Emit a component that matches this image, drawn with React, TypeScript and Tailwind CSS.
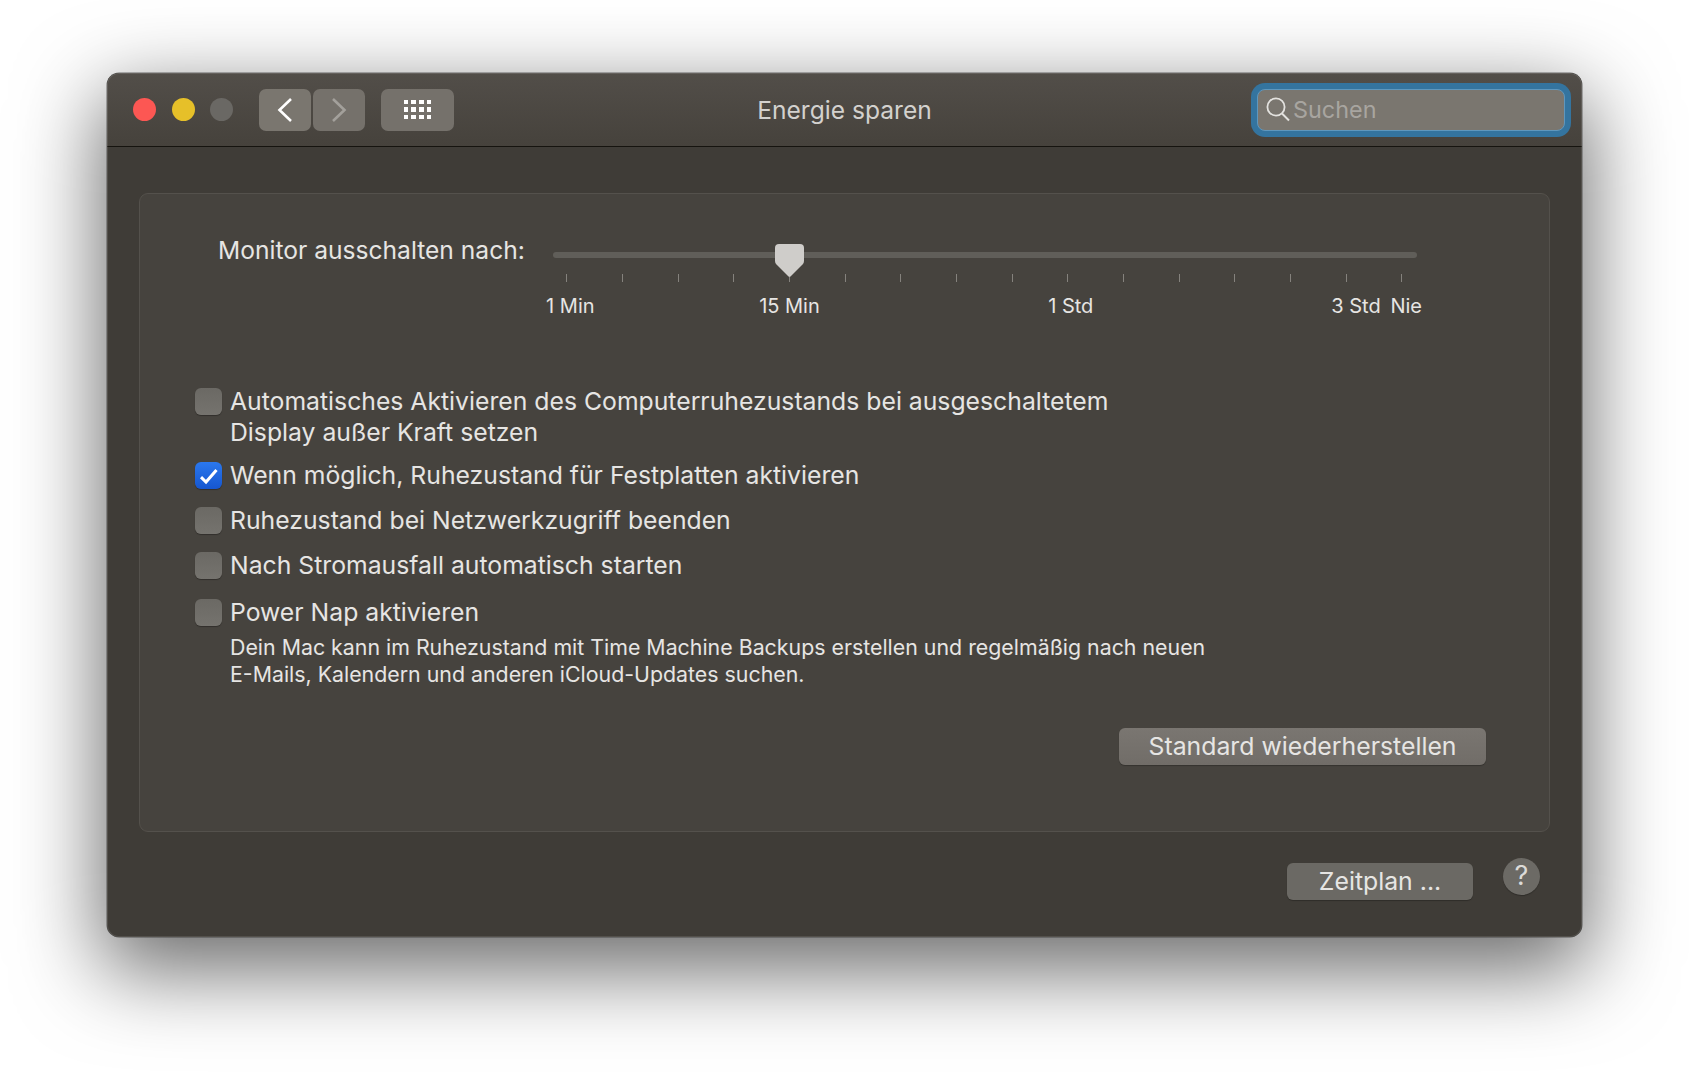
const font = "font-['Inter','Liberation_Sans',sans-serif]";

function Check({ checked, label }: { checked?: boolean; label: React.ReactNode }) {
  return (
    <div className="flex items-start">
      <div
        className={
          checked
            ? "w-[27px] h-[27px] rounded-[6px] bg-gradient-to-b from-[#2b78ee] to-[#1656cf] shadow-[0_1px_1px_rgba(0,0,0,0.3)] flex items-center justify-center shrink-0 mt-[2px]"
            : "w-[27px] h-[27px] rounded-[6px] bg-gradient-to-b from-[#6b6964] to-[#75736e] shadow-[0_1px_1px_rgba(0,0,0,0.3)] shrink-0 mt-[2px]"
        }
      >
        {checked && (
          <svg width="27" height="27" viewBox="0 0 27 27" fill="none">
            <path d="M6 15.2L11 20L21.5 8" stroke="white" strokeWidth="3" />
          </svg>
        )}
      </div>
      <div className="ml-[8px] text-[24.75px] leading-[31px] text-[#e6e5e3]">{label}</div>
    </div>
  );
}

const labels: [number, string, string][] = [
  [1, "1 Min", "ml-[7px]"],
  [5, "15 Min", ""],
  [10, "1 Std", "ml-[6px]"],
  [15, "3 Std", "ml-[20px]"],
  [16, "Nie", "ml-[9px]"],
];

export default function App() {
  return (
    <div className={`h-screen w-full bg-white overflow-hidden pt-[73px] pl-[107px] ${font}`}>
      <div className="w-[1475px] h-[864px] rounded-[12px] bg-[#3f3c37] overflow-hidden relative shadow-[0_0_0_0.5px_rgba(30,30,30,0.6),0_28px_84px_6px_rgba(0,0,0,0.58)]">
        <div className="absolute inset-0 rounded-[12px] pointer-events-none z-10 shadow-[inset_0_0_0_1px_rgba(255,255,255,0.11)]" />
        {/* Title bar */}
        <div className="h-[74px] flex items-center bg-gradient-to-b from-[#524e49] to-[#46423c] border-b border-[#16140f] px-[17px]">
          <div className="flex-1 flex items-center">
            <div className="ml-[9px] flex gap-[15.5px]">
              <div className="w-[23px] h-[23px] rounded-full bg-[#fc5753]" />
              <div className="w-[23px] h-[23px] rounded-full bg-[#e6c029]" />
              <div className="w-[23px] h-[23px] rounded-full bg-[#6a6864]" />
            </div>
            <div className="ml-[26px] flex gap-[2px]">
              <div className="w-[52px] h-[42px] rounded-[7px] bg-[#7a766f] flex items-center justify-center">
                <svg width="16" height="26" viewBox="0 0 16 26" fill="none">
                  <path d="M14 2L2.5 13L14 24" stroke="#fff" strokeWidth="2.6" />
                </svg>
              </div>
              <div className="w-[52px] h-[42px] rounded-[7px] bg-[#75716b] flex items-center justify-center">
                <svg width="16" height="26" viewBox="0 0 16 26" fill="none">
                  <path d="M2 2L13.5 13L2 24" stroke="#a3a09b" strokeWidth="2.6" />
                </svg>
              </div>
            </div>
            <div className="ml-[16px] w-[73px] h-[42px] rounded-[7px] bg-[#75716b] flex items-center justify-center">
              <div className="grid grid-cols-4 gap-[3.2px]">
                {Array.from({ length: 12 }).map((_, i) => (
                  <div key={i} className="w-[4.5px] h-[4.5px] bg-white" />
                ))}
              </div>
            </div>
          </div>
          <div className="mt-[2px] text-[24.6px] text-[#d3d1ce] whitespace-nowrap">Energie sparen</div>
          <div className="flex-1 flex justify-end">
            <div className="w-[308px] h-[42px] rounded-[8px] bg-[#7a766f] border border-[#5f97bd] flex items-center pl-[8px] shadow-[0_0_0_6px_#34749f]">
              <svg width="26" height="28" viewBox="0 0 26 28" fill="none">
                <circle cx="10" cy="11" r="8.6" stroke="#e3e2df" strokeWidth="1.8" />
                <path d="M16 17.5L23 24.5" stroke="#e3e2df" strokeWidth="2" />
              </svg>
              <span className="ml-[1px] text-[23.4px] text-[#a8a5a0]">Suchen</span>
            </div>
          </div>
        </div>

        {/* Panel */}
        <div className="mt-[46px] ml-[32px] w-[1411px] h-[639px] rounded-[9px] bg-[#46433e] border border-[#54514c]">
          <div className="pt-[40px] pl-[78px] flex">
            <div className="w-[321px] text-[24.6px] leading-[32px] text-[#e6e5e3] whitespace-nowrap">
              Monitor ausschalten nach:
            </div>
            <div className="relative pt-[18px]">
              <div className="ml-[14px] w-[864px] h-[6px] rounded-full bg-[#605e59]" />
              <svg className="absolute left-[236px] top-[10px]" width="29" height="33" viewBox="0 0 29 33">
                <path
                  d="M4 0H25Q29 0 29 4V17Q29 19 27.5 20.5L15.5 32.5Q14.5 33 13.5 32.5L1.5 20.5Q0 19 0 17V4Q0 0 4 0Z"
                  fill="#cfcdca"
                />
              </svg>
              <div className="mt-[16px] grid grid-cols-[repeat(16,55.67px)]">
                {Array.from({ length: 16 }).map((_, i) => (
                  <div key={i} className="flex justify-center">
                    <div className="w-[1px] h-[8px] bg-[#85827d]" />
                  </div>
                ))}
              </div>
              <div className="mt-[12px] grid grid-cols-[repeat(16,55.67px)] text-[20px] leading-[24px] text-[#e6e5e3]">
                {labels.map(([col, text, cls]) => (
                  <div
                    key={text}
                    style={{ gridColumnStart: col }}
                    className="flex justify-center whitespace-nowrap"
                  >
                    <span className={cls}>{text}</span>
                  </div>
                ))}
              </div>
            </div>
          </div>

          <div className="mt-[68px] ml-[55px] flex flex-col">
            <Check
              label={
                <>
                  Automatisches Aktivieren des Computerruhezustands bei ausgeschaltetem
                  <br />
                  Display außer Kraft setzen
                </>
              }
            />
            <div className="mt-[12px]">
              <Check checked label="Wenn möglich, Ruhezustand für Festplatten aktivieren" />
            </div>
            <div className="mt-[14px]">
              <Check label="Ruhezustand bei Netzwerkzugriff beenden" />
            </div>
            <div className="mt-[14px]">
              <Check label="Nach Stromausfall automatisch starten" />
            </div>
            <div className="mt-[16px]">
              <Check label="Power Nap aktivieren" />
            </div>
            <div className="mt-[6px] ml-[35px] text-[21.35px] leading-[27px] text-[#e6e5e3] whitespace-nowrap">
              Dein Mac kann im Ruhezustand mit Time Machine Backups erstellen und regelmäßig nach neuen
              <br />
              E-Mails, Kalendern und anderen iCloud-Updates suchen.
            </div>
          </div>
          <div className="mt-[40px] mr-[63px] flex justify-end">
            <div className="w-[367px] h-[37px] rounded-[6px] bg-gradient-to-b from-[#7a7671] to-[#716d68] flex items-center justify-center text-[24.8px] text-[#e6e5e3] shadow-[0_1px_1px_rgba(0,0,0,0.25)]">
              Standard wiederherstellen
            </div>
          </div>
        </div>

        {/* Footer */}
        <div className="mt-[26px] pr-[42px] flex justify-end items-start">
          <div className="mt-[5px] w-[186px] h-[37px] rounded-[6px] bg-[#6b6964] flex items-center justify-center text-[24.8px] text-[#e6e5e3] shadow-[0_1px_1px_rgba(0,0,0,0.25)]">
            Zeitplan ...
          </div>
          <div className="ml-[30px] w-[37px] h-[37px] rounded-full bg-[#6c6a65] flex items-center justify-center text-[27px] text-[#dcdbd8] shadow-[0_1px_1px_rgba(0,0,0,0.25)]">
            ?
          </div>
        </div>
      </div>
    </div>
  );
}
